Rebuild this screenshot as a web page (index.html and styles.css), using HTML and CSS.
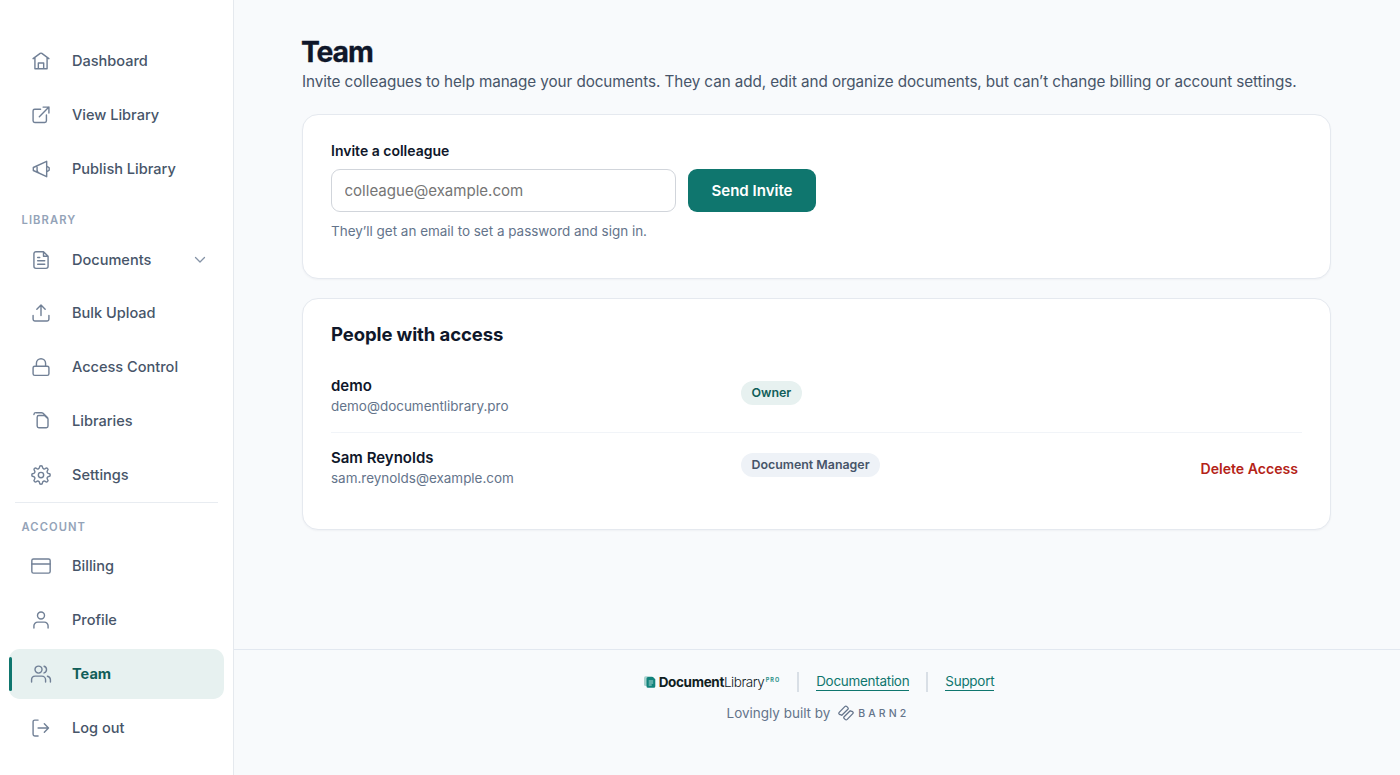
FILE: index.html
```html
<!DOCTYPE html>
<html lang="en">
<head>
<meta charset="utf-8">
<title>Team</title>
<link rel="stylesheet" href="styles.css">
</head>
<body>
<div class="app">
  <aside class="sidebar">
    <nav class="nav">
      <a class="item"><svg class="icon" viewBox="0 0 24 24"><path d="M2.500 9.200 11 2.900a1.700 1.700 0 0 1 2 0l8.500 6.300M4.700 7.900v13.300h14.600V7.900M8.800 21v-6.600h6.400V21"/></svg><span>Dashboard</span></a>
      <a class="item"><svg class="icon" viewBox="0 0 24 24"><path d="M11.500 5H4.500a2 2 0 0 0-2 2v12a2 2 0 0 0 2 2h12a2 2 0 0 0 2-2v-7M14.500 2.500h7v7M21.500 2.500 10 14"/></svg><span>View Library</span></a>
      <a class="item"><svg class="icon" viewBox="0 0 24 24"><path d="M2.800 10.200 18.800 2.800v18.400L2.800 13.800zM18.800 8.500l3 2v3l-3 2M7.300 8.300v4.200a4 4 0 0 0 2.700 4.500"/></svg><span>Publish Library</span></a>
    </nav>
    <div class="label">Library</div>
    <nav class="nav">
      <a class="item"><svg class="icon" viewBox="0 0 24 24"><path d="M15 2H6a2.500 2.500 0 0 0-2.500 2.500v15A2.500 2.500 0 0 0 6 22h12a2.500 2.500 0 0 0 2.500-2.500V7.500zM15 2v5.500h5.500M8 9h2.500M8 13h8.500M8 17h8.500"/></svg><span>Documents</span><svg class="chevron" viewBox="0 0 12 12"><path d="m1.500 3.500 4.500 4.500 4.500-4.500"/></svg></a>
      <a class="item"><svg class="icon" viewBox="0 0 24 24"><path d="M2.500 15v4.500a2 2 0 0 0 2 2h15a2 2 0 0 0 2-2V15M7 7.500l5-5 5 5M12 2.500V15"/></svg><span>Bulk Upload</span></a>
      <a class="item"><svg class="icon" viewBox="0 0 24 24"><rect x="2.500" y="11" width="19" height="11" rx="2"/><path d="M6.500 11V7.500a5.500 5.500 0 0 1 11 0V11"/></svg><span>Access Control</span></a>
      <a class="item"><svg class="icon" viewBox="0 0 24 24"><path d="M9.400 5.400h6.800l4.200 4v8.600a2 2 0 0 1-2 2h-9a2 2 0 0 1-2-2V7.400a2 2 0 0 1 2-2zM3.500 4.200a2.400 2.400 0 0 1 2.400-2.200h6.600a3 3 0 0 1 2 .8l5.500 5.400"/></svg><span>Libraries</span></a>
      <a class="item"><svg class="icon" viewBox="0 0 24 24"><circle cx="12" cy="12" r="3.200"/><path transform="translate(12 12)" d="M-1.800-9.300A1.800 1.800 0 0 1 1.800-9.300A2.100 2.100 0 0 0 5.300-7.850A1.800 1.800 0 0 1 7.850-5.300A2.100 2.100 0 0 0 9.300-1.800A1.800 1.800 0 0 1 9.300 1.800A2.100 2.100 0 0 0 7.850 5.300A1.800 1.800 0 0 1 5.300 7.850A2.100 2.100 0 0 0 1.800 9.300A1.800 1.800 0 0 1-1.800 9.300A2.100 2.100 0 0 0-5.300 7.850A1.800 1.800 0 0 1-7.850 5.300A2.100 2.100 0 0 0-9.300 1.800A1.800 1.800 0 0 1-9.300-1.800A2.100 2.100 0 0 0-7.850-5.300A1.800 1.800 0 0 1-5.300-7.850A2.100 2.100 0 0 0-1.800-9.300z"/></svg><span>Settings</span></a>
    </nav>
    <div class="divider"></div>
    <div class="label account">Account</div>
    <nav class="nav">
      <a class="item"><svg class="icon" viewBox="0 0 24 24"><rect x="1" y="3.500" width="22" height="17" rx="2"/><path d="M1 9.500h22"/></svg><span>Billing</span></a>
      <a class="item"><svg class="icon" viewBox="0 0 24 24"><path d="M20.500 21.500v-2.500a4.500 4.500 0 0 0-4.500-4.500H8A4.500 4.500 0 0 0 3.500 19v2.500"/><circle cx="12" cy="6.500" r="4.200"/></svg><span>Profile</span></a>
      <a class="item active"><svg class="icon" viewBox="0 0 24 24"><path d="M17.500 21.500v-2.500a4.500 4.500 0 0 0-4.500-4.500H5A4.500 4.500 0 0 0 .7 19v2.500M23.300 21.500v-2.500a4.500 4.500 0 0 0-3.600-4.350M15.700 2.700a4.200 4.200 0 0 1 0 8"/><circle cx="9" cy="6.700" r="4.200"/></svg><span>Team</span></a>
      <a class="item"><svg class="icon" viewBox="0 0 24 24"><path d="M8.500 2.500h-4a2 2 0 0 0-2 2v15a2 2 0 0 0 2 2h4M16 7l5 5-5 5M21 12H8.500"/></svg><span>Log out</span></a>
    </nav>
  </aside>
  <div class="content">
    <main class="main">
      <h1 class="title">Team</h1>
      <p class="subtitle">Invite colleagues to help manage your documents. They can add, edit and organize documents, but can’t change billing or account settings.</p>
      <section class="card invite">
        <label class="field-label" for="email">Invite a colleague</label>
        <div class="form-row">
          <input class="input" id="email" type="email" placeholder="colleague@example.com">
          <button class="button">Send Invite</button>
        </div>
        <p class="hint">They’ll get an email to set a password and sign in.</p>
      </section>
      <section class="card people">
        <h2 class="card-title">People with access</h2>
        <div class="person">
          <div><div class="name">demo</div><div class="mail">demo@documentlibrary.pro</div></div>
          <div><span class="badge owner">Owner</span></div>
          <div></div>
        </div>
        <div class="person">
          <div><div class="name">Sam Reynolds</div><div class="mail">sam.reynolds@example.com</div></div>
          <div><span class="badge">Document Manager</span></div>
          <a class="delete">Delete Access</a>
        </div>
      </section>
    </main>
    <footer class="footer">
      <div class="footer-links">
        <div class="brand">
          <svg class="brand-mark" viewBox="0 0 12 12"><rect x="0" y=".3" width="9" height="9.800" rx="1.500" fill="#a9d3cf"/><path d="M4 1h5l2.300 2.300v7a1.500 1.500 0 0 1-1.500 1.500H4a1.500 1.500 0 0 1-1.500-1.500v-7.800A1.500 1.500 0 0 1 4 1z" fill="#12837c"/><path d="M4.700 5h4.500M4.700 7h4.500M4.700 9h3" stroke="#d5eeeb" stroke-width=".8"/></svg>
          <span class="brand-bold">Document</span><span class="brand-light">Library</span><span class="brand-pro">PRO</span>
        </div>
        <span class="bar"></span>
        <a class="link">Documentation</a>
        <span class="bar"></span>
        <a class="link">Support</a>
      </div>
      <div class="credit">
        <span>Lovingly built by</span>
        <svg class="barn-mark" viewBox="0 0 16 16"><path d="M3.800 10.200 1.400 9.300a1.200 1.200 0 0 1-.2-1.900L6.800 1.600a1.500 1.500 0 0 1 2.100 0l1 1a1.100 1.100 0 0 1 0 1.600L3.800 10.200M12.200 5.800l2.400.9a1.200 1.200 0 0 1 .2 1.900L9.200 14.400a1.500 1.500 0 0 1-2.100 0l-1-1a1.100 1.100 0 0 1 0-1.600L12.200 5.800"/></svg>
        <span class="barn">BARN2</span>
      </div>
    </footer>
  </div>
</div>
</body>
</html>
```
FILE: styles.css
```css
* { box-sizing: border-box; }
body { margin: 0; font-family: Inter, "Liberation Sans", sans-serif; background: #f8fafc; color: #0f172a; }
h1, h2, p { margin: 0; }
.app { display: flex; height: 775px; overflow: hidden; }
.sidebar { width: 234px; flex: none; background: #fff; border-right: 1px solid #e5e9ee; padding: 36.800px 9px 0; }
.nav { display: flex; flex-direction: column; gap: 4.450px; }
.item { display: flex; align-items: center; height: 49.400px; padding: 0 18px 0 22px; font-size: 14.550px; font-weight: 500; color: #475569; border-radius: 10.800px; }
.icon { width: 20px; height: 20px; margin-right: 21px; fill: none; stroke: #718096; stroke-width: 1.700; stroke-linecap: round; stroke-linejoin: round; overflow: visible; }
.chevron { width: 12px; height: 12px; margin-left: auto; fill: none; stroke: #8492a6; stroke-width: 1.300; stroke-linecap: round; stroke-linejoin: round; }
.active { background: #e7f1f0; color: #115e59; font-weight: 700; position: relative; }
.active::before { content: ""; position: absolute; left: 0; top: 7.500px; width: 3px; height: 34.500px; background: #0f766e; border-radius: 2px; }
.label { height: 41px; padding: 19px 0 0 12.500px; font-size: 11.200px; line-height: 14px; font-weight: 600; letter-spacing: 1.100px; text-transform: uppercase; color: #94a3b8; }
.divider { height: 1px; margin: 2px 6px 0; background: #e8ecf1; }
.account { height: 39px; padding-top: 17px; }
.content { flex: 1; display: flex; flex-direction: column; }
.main { height: 649px; padding: 34px 69px 0 68px; }
.title { margin-left: -1px; font-size: 28.300px; line-height: 36px; font-weight: 700; letter-spacing: -1.100px; -webkit-text-stroke: .3px #0f172a; }
.subtitle { font-size: 15.250px; line-height: 24px; letter-spacing: -.085px; color: #475569; white-space: nowrap; }
.card { background: #fff; border: 1px solid #e5e9ef; border-radius: 16px; padding: 0 28px; box-shadow: 0 1px 2px rgba(15, 23, 42, .04); }
.invite { height: 165px; margin-top: 20px; padding-top: 26px; }
.field-label { display: block; font-size: 14px; line-height: 20px; font-weight: 600; }
.form-row { display: flex; gap: 12px; margin-top: 8px; }
.input { width: 345px; height: 43px; border: 1px solid #d1d5db; border-radius: 9px; padding: 0 12.500px; font: 400 15.050px Inter, sans-serif; color: #0f172a; background: #fff; }
.input::placeholder { color: #757575; }
.button { width: 128px; height: 43px; border: 0; border-radius: 9px; background: #0f766e; color: #fff; font: 600 15.050px Inter, sans-serif; padding: 0; }
.hint { margin-top: 9px; font-size: 13.460px; line-height: 20px; color: #64748b; }
.people { height: 232px; margin-top: 19px; padding-top: 22px; }
.card-title { font-size: 18.500px; line-height: 26px; font-weight: 700; letter-spacing: -.1px; }
.person { display: grid; grid-template-columns: 410px 1fr auto; height: 72px; padding-top: 14px; }
.card-title + .person { margin-top: 14px; border-bottom: 1px solid #f1f4f8; }
.name { padding-top: 1px; font-size: 15px; line-height: 20px; font-weight: 600; }
.mail { font-size: 13.460px; line-height: 21px; color: #64748b; }
.badge { display: inline-block; height: 24px; line-height: 24px; margin-top: 6px; padding: 0 10.500px; border-radius: 12px; background: #eef2f7; color: #475569; font-size: 12.400px; font-weight: 600; vertical-align: top; }
.owner { background: #e7f1f0; color: #115e59; }
.delete { padding: 12px 4px 0 0; font-size: 14.100px; line-height: 20px; font-weight: 600; color: #b42318; }
.footer { flex: 1; border-top: 1px solid #e2e8f0; padding: 21px 0 0 4px; }
.footer-links, .credit { display: flex; justify-content: center; align-items: center; }
.footer-links { height: 21px; gap: 17px; }
.brand { display: flex; align-items: center; font-size: 13.500px; letter-spacing: -.35px; color: #10201f; }
.brand-mark { width: 12px; height: 12px; margin-right: 3px; }
.brand-bold { font-weight: 700; }
.brand-light { font-weight: 300; letter-spacing: -.5px; }
.brand-pro { font-size: 5.500px; font-weight: 700; letter-spacing: 1px; color: #2a8f88; margin: -4px 0 0 1.500px; }
.bar { width: 2px; height: 20px; background: #d9dfe6; }
.link { font-size: 13.460px; line-height: 17px; letter-spacing: -.27px; color: #0f766e; border-bottom: 1px solid #0f766e; }
.credit { height: 20px; margin-top: 11px; font-size: 13.460px; color: #64748b; padding-right: 2px; }
.barn-mark { width: 16px; height: 16px; margin: 0 4px 0 8px; fill: none; stroke: #64748b; stroke-width: 1.300; stroke-linecap: round; stroke-linejoin: round; }
.barn { font-size: 10.500px; font-weight: 500; letter-spacing: 3.100px; }
```
